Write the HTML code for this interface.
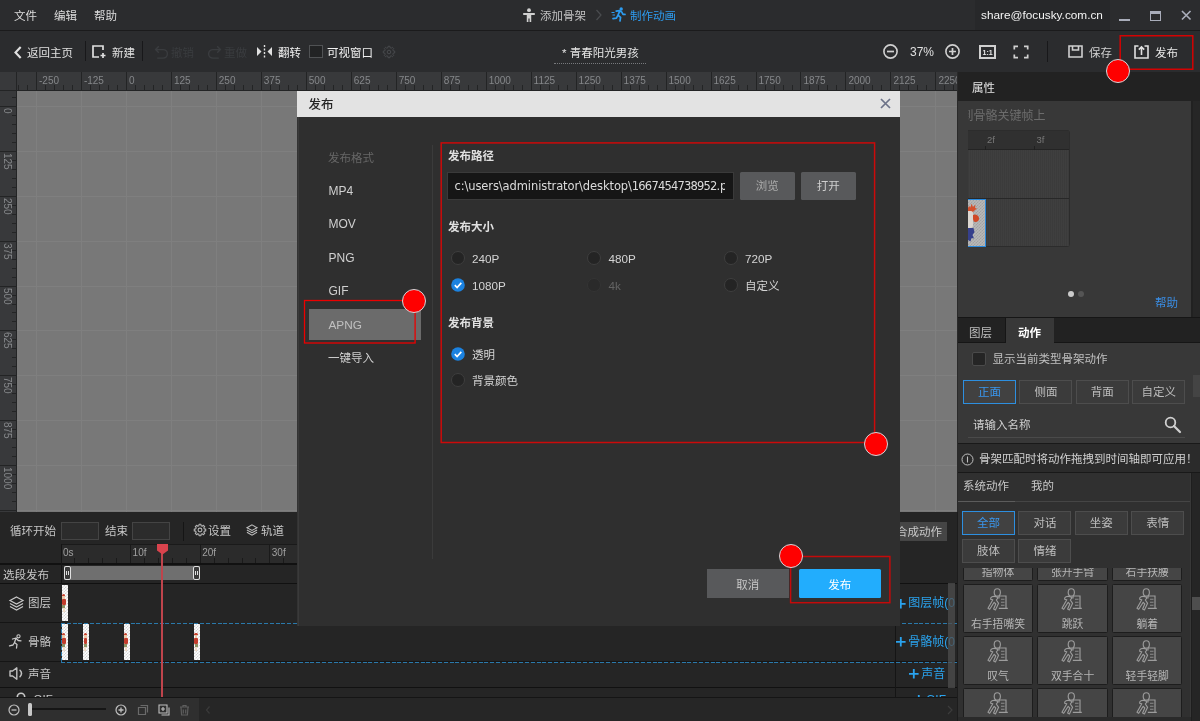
<!DOCTYPE html>
<html lang="zh-CN"><head><meta charset="utf-8"><title>发布</title>
<style>
*{box-sizing:border-box;margin:0;padding:0}
html,body{width:1200px;height:721px;overflow:hidden;background:#2b2c2e}
body{font-family:"Liberation Sans","Noto Sans CJK SC",sans-serif;font-size:11.5px;color:#d8d8d8;line-height:1}
#app{transform:translateZ(0);will-change:transform;position:relative;width:1200px;height:721px;overflow:hidden;background:#2b2c2e}
.a{position:absolute}
.t{position:absolute;white-space:nowrap;line-height:16px;height:16px}
svg{position:absolute;overflow:visible}
.blue{color:#2d9cf0}
.dim{color:#45474a}
.b{font-weight:bold}
.rc{position:absolute;border:1px solid #e00006}
.dot{position:absolute;width:24.200px;height:24.200px;border-radius:50%;background:#ff0000;border:1px solid #cfd9dc}

</style></head>
<body>
<div id="app">
<div class="a" id="titlebar" style="left:0;top:0;width:1200px;height:30px;background:#2b2c2e"></div>
<div class="a" style="left:0;top:30px;width:1200px;height:1px;background:#1b1b1c"></div>
<div class="a" style="left:975px;top:0;width:135px;height:30px;background:#27282a"></div>
<div class="t" style="left:14px;top:8px;color:#dcdcdc">文件</div>
<div class="t" style="left:54px;top:8px;color:#dcdcdc">编辑</div>
<div class="t" style="left:94px;top:8px;color:#dcdcdc">帮助</div>
<svg style="left:521.500px;top:7.500px" width="14" height="14.500" viewBox="0 0 14 15"><circle cx="7" cy="2.2" r="2" fill="#d0d0d0"/><path d="M1 5.2h12v2H9.3v7.3H7.6v-3.6H6.4v3.6H4.7V7.2H1z" fill="#d0d0d0"/></svg>
<div class="t" style="left:540px;top:8px;color:#c0c0c0">添加骨架</div>
<svg style="left:595px;top:9px" width="8" height="12" viewBox="0 0 8 12"><path d="M1.5 1l4.5 5-4.5 5" fill="none" stroke="#4a4c4f" stroke-width="1.2"/></svg>
<svg style="left:611px;top:7px" width="15" height="15" viewBox="0 0 15 15"><circle cx="10.2" cy="2" r="1.7" fill="#2d9cf0"/><path d="M5.2 4.2l3.6-.6 2 1.6 1.2 2.2h2M8.6 4.4L7 8.2l2.6 2.2-.6 3.6M7 8.2l-1.6 3-3.4.4" fill="none" stroke="#2d9cf0" stroke-width="1.7" stroke-linecap="round" stroke-linejoin="round"/><path d="M0.5 5.5h3M1.5 8h2.5" stroke="#2d9cf0" stroke-width="1.1"/></svg>
<div class="t blue" style="left:630px;top:8px">制作动画</div>
<div class="t" style="left:981px;top:7px;color:#f4f4f4;font-size:11.800px">share@focusky.com.cn</div>
<div class="a" style="left:1119px;top:19px;width:11px;height:2px;background:#a9adba"></div>
<div class="a" style="left:1149.500px;top:10.500px;width:11.500px;height:10px;border:1.500px solid #a9adba;border-top-width:3px"></div>
<svg style="left:1180.500px;top:9.500px" width="10.500" height="10.500" viewBox="0 0 11 11"><path d="M1 1l9 9M10 1l-9 9" stroke="#a9adba" stroke-width="1.700"/></svg>
<div class="a" id="toolbar" style="left:0;top:31px;width:1200px;height:41px;background:#2b2c2e"></div>
<svg style="left:14px;top:46px" width="8" height="13" viewBox="0 0 8 13"><path d="M6.700 1L1.500 6.500l5.200 5.500" fill="none" stroke="#e0e0e0" stroke-width="2.100"/></svg>
<div class="t" style="left:27px;top:45px;color:#e0e0e0">返回主页</div>
<div class="a" style="left:85px;top:41px;width:1px;height:20px;background:#18181a"></div>
<svg style="left:92px;top:45px" width="15" height="14" viewBox="0 0 15 14"><path d="M11 5V1H1v11h6" fill="none" stroke="#e0e0e0" stroke-width="1.7"/><path d="M11 8v5M8.5 10.5h5" stroke="#e0e0e0" stroke-width="1.7"/></svg>
<div class="t" style="left:112px;top:45px;color:#e0e0e0">新建</div>
<div class="a" style="left:142px;top:41px;width:1px;height:20px;background:#18181a"></div>
<svg style="left:153.500px;top:45px" width="15" height="14.500" viewBox="0 0 14 13"><path d="M4.5 1L1.5 4l3 3M1.5 4h7a4 4 0 0 1 0 8H3" fill="none" stroke="#3a3c3f" stroke-width="1.3"/></svg>
<div class="t" style="left:171px;top:45px;color:#3a3c3f">撤销</div>
<svg style="left:206.500px;top:44.500px" width="15" height="14.500" viewBox="0 0 14 13"><path d="M9.5 1l3 3-3 3M12.500 4h-7a4 4 0 0 0 0 8H11" fill="none" stroke="#3a3c3f" stroke-width="1.3"/></svg>
<div class="t" style="left:224px;top:45px;color:#3a3c3f">重做</div>
<svg style="left:256px;top:45px" width="17" height="13" viewBox="0 0 17 13"><path d="M1 2l4.500 4.500L1 11zM16 2l-4.500 4.500L16 11z" fill="#e0e0e0"/><path d="M8.500 0v13" stroke="#e0e0e0" stroke-width="1.4" stroke-dasharray="2 1.5"/></svg>
<div class="t" style="left:278px;top:45px;color:#f0f0f0">翻转</div>
<div class="a" style="left:309px;top:45px;width:14px;height:13px;background:#222324;border:1px solid #505254"></div>
<div class="t" style="left:327px;top:45px;color:#f0f0f0">可视窗口</div>
<svg style="left:383px;top:45.500px" width="12" height="12" viewBox="0 0 12 12"><path d="M10.26 4.89 L11.73 5.09 L11.73 6.91 L10.26 7.11 L9.80 8.22 L10.69 9.41 L9.41 10.69 L8.22 9.80 L7.11 10.26 L6.91 11.73 L5.09 11.73 L4.89 10.26 L3.78 9.80 L2.59 10.69 L1.31 9.41 L2.20 8.22 L1.74 7.11 L0.27 6.91 L0.27 5.09 L1.74 4.89 L2.20 3.78 L1.31 2.59 L2.59 1.31 L3.78 2.20 L4.89 1.74 L5.09 0.27 L6.91 0.27 L7.11 1.74 L8.22 2.20 L9.41 1.31 L10.69 2.59 L9.80 3.78Z" fill="none" stroke="#494b4e" stroke-width="1" stroke-linejoin="round"/><circle cx="6" cy="6" r="1.800" fill="none" stroke="#494b4e" stroke-width="1"/></svg>
<div class="t" style="left:562px;top:45px;color:#e4e4e4">* 青春阳光男孩</div>
<div class="a" style="left:554px;top:63px;width:92px;height:0;border-top:1px dotted #77797c"></div>
<svg style="left:883px;top:44px" width="15" height="15" viewBox="0 0 15 15"><circle cx="7.500" cy="7.500" r="6.600" fill="none" stroke="#d0d0d0" stroke-width="1.600"/><path d="M4 7.500h7" stroke="#d0d0d0" stroke-width="1.700"/></svg>
<div class="t" style="left:910px;top:44px;color:#e0e0e0;font-size:12px">37%</div>
<svg style="left:945px;top:44px" width="15" height="15" viewBox="0 0 15 15"><circle cx="7.500" cy="7.500" r="6.600" fill="none" stroke="#d0d0d0" stroke-width="1.600"/><path d="M4 7.500h7M7.500 4v7" stroke="#d0d0d0" stroke-width="1.700"/></svg>
<div class="a" style="left:979px;top:45px;width:16.500px;height:14px;border:2px solid #d0d0d0"></div><div class="t" style="left:982.500px;top:47.500px;font-size:7px;line-height:9px;height:9px;color:#e8e8e8;font-weight:bold">1:1</div>
<svg style="left:1013px;top:45px" width="16" height="14" viewBox="0 0 16 14"><path d="M1.300 4.500V1.300h3.700M11 1.300h3.700v3.200M14.700 9.500v3.200H11M5 12.700H1.300V9.500" fill="none" stroke="#d0d0d0" stroke-width="1.700"/></svg>
<div class="a" style="left:1047px;top:41px;width:1px;height:21px;background:#18181a"></div>
<svg style="left:1068px;top:45px" width="15" height="13" viewBox="0 0 15 13"><path d="M1 1h13v11H1z" fill="none" stroke="#d0d0d0" stroke-width="1.600"/><path d="M4.500 1v4h6V1" fill="none" stroke="#d0d0d0" stroke-width="1.600"/></svg>
<div class="t" style="left:1089px;top:45px;color:#d0d0d0">保存</div>
<svg style="left:1134px;top:44px" width="15" height="15" viewBox="0 0 15 15"><path d="M4.500 2H1v12h13V2h-3.500" fill="none" stroke="#e0e0e0" stroke-width="1.600"/><path d="M7.500 11V3M4.800 5.600L7.500 2.800l2.700 2.800" fill="none" stroke="#e0e0e0" stroke-width="1.600"/></svg>
<div class="t" style="left:1155px;top:45px;color:#e8e8e8">发布</div>
<div class="a" id="hruler" style="left:0;top:72px;width:958px;height:19px;background:#38393b;overflow:hidden">
<div class="a" style="left:-9.0px;top:0;width:1px;height:19px;background:#232425"></div><div class="a" style="left:-0.0px;top:13px;width:1px;height:6px;background:#232425"></div><div class="a" style="left:9.0px;top:13px;width:1px;height:6px;background:#232425"></div><div class="a" style="left:18.0px;top:13px;width:1px;height:6px;background:#232425"></div><div class="a" style="left:27.0px;top:13px;width:1px;height:6px;background:#232425"></div><div class="a" style="left:36.0px;top:0;width:1px;height:19px;background:#232425"></div><div class="a" style="left:45.0px;top:13px;width:1px;height:6px;background:#232425"></div><div class="a" style="left:53.9px;top:13px;width:1px;height:6px;background:#232425"></div><div class="a" style="left:62.9px;top:13px;width:1px;height:6px;background:#232425"></div><div class="a" style="left:71.9px;top:13px;width:1px;height:6px;background:#232425"></div><div class="t" style="left:39.0px;top:3px;font-size:10px;line-height:12px;height:12px;color:#85878a">-250</div>
<div class="a" style="left:80.9px;top:0;width:1px;height:19px;background:#232425"></div><div class="a" style="left:89.9px;top:13px;width:1px;height:6px;background:#232425"></div><div class="a" style="left:98.9px;top:13px;width:1px;height:6px;background:#232425"></div><div class="a" style="left:107.9px;top:13px;width:1px;height:6px;background:#232425"></div><div class="a" style="left:116.9px;top:13px;width:1px;height:6px;background:#232425"></div><div class="t" style="left:83.9px;top:3px;font-size:10px;line-height:12px;height:12px;color:#85878a">-125</div>
<div class="a" style="left:125.9px;top:0;width:1px;height:19px;background:#232425"></div><div class="a" style="left:134.9px;top:13px;width:1px;height:6px;background:#232425"></div><div class="a" style="left:143.9px;top:13px;width:1px;height:6px;background:#232425"></div><div class="a" style="left:152.9px;top:13px;width:1px;height:6px;background:#232425"></div><div class="a" style="left:161.9px;top:13px;width:1px;height:6px;background:#232425"></div><div class="t" style="left:128.9px;top:3px;font-size:10px;line-height:12px;height:12px;color:#85878a">0</div>
<div class="a" style="left:170.9px;top:0;width:1px;height:19px;background:#232425"></div><div class="a" style="left:179.9px;top:13px;width:1px;height:6px;background:#232425"></div><div class="a" style="left:188.9px;top:13px;width:1px;height:6px;background:#232425"></div><div class="a" style="left:197.9px;top:13px;width:1px;height:6px;background:#232425"></div><div class="a" style="left:206.8px;top:13px;width:1px;height:6px;background:#232425"></div><div class="t" style="left:173.9px;top:3px;font-size:10px;line-height:12px;height:12px;color:#85878a">125</div>
<div class="a" style="left:215.8px;top:0;width:1px;height:19px;background:#232425"></div><div class="a" style="left:224.8px;top:13px;width:1px;height:6px;background:#232425"></div><div class="a" style="left:233.8px;top:13px;width:1px;height:6px;background:#232425"></div><div class="a" style="left:242.8px;top:13px;width:1px;height:6px;background:#232425"></div><div class="a" style="left:251.8px;top:13px;width:1px;height:6px;background:#232425"></div><div class="t" style="left:218.8px;top:3px;font-size:10px;line-height:12px;height:12px;color:#85878a">250</div>
<div class="a" style="left:260.8px;top:0;width:1px;height:19px;background:#232425"></div><div class="a" style="left:269.8px;top:13px;width:1px;height:6px;background:#232425"></div><div class="a" style="left:278.8px;top:13px;width:1px;height:6px;background:#232425"></div><div class="a" style="left:287.8px;top:13px;width:1px;height:6px;background:#232425"></div><div class="a" style="left:296.8px;top:13px;width:1px;height:6px;background:#232425"></div><div class="t" style="left:263.8px;top:3px;font-size:10px;line-height:12px;height:12px;color:#85878a">375</div>
<div class="a" style="left:305.8px;top:0;width:1px;height:19px;background:#232425"></div><div class="a" style="left:314.8px;top:13px;width:1px;height:6px;background:#232425"></div><div class="a" style="left:323.8px;top:13px;width:1px;height:6px;background:#232425"></div><div class="a" style="left:332.8px;top:13px;width:1px;height:6px;background:#232425"></div><div class="a" style="left:341.8px;top:13px;width:1px;height:6px;background:#232425"></div><div class="t" style="left:308.8px;top:3px;font-size:10px;line-height:12px;height:12px;color:#85878a">500</div>
<div class="a" style="left:350.8px;top:0;width:1px;height:19px;background:#232425"></div><div class="a" style="left:359.7px;top:13px;width:1px;height:6px;background:#232425"></div><div class="a" style="left:368.7px;top:13px;width:1px;height:6px;background:#232425"></div><div class="a" style="left:377.7px;top:13px;width:1px;height:6px;background:#232425"></div><div class="a" style="left:386.7px;top:13px;width:1px;height:6px;background:#232425"></div><div class="t" style="left:353.8px;top:3px;font-size:10px;line-height:12px;height:12px;color:#85878a">625</div>
<div class="a" style="left:395.7px;top:0;width:1px;height:19px;background:#232425"></div><div class="a" style="left:404.7px;top:13px;width:1px;height:6px;background:#232425"></div><div class="a" style="left:413.7px;top:13px;width:1px;height:6px;background:#232425"></div><div class="a" style="left:422.7px;top:13px;width:1px;height:6px;background:#232425"></div><div class="a" style="left:431.7px;top:13px;width:1px;height:6px;background:#232425"></div><div class="t" style="left:398.7px;top:3px;font-size:10px;line-height:12px;height:12px;color:#85878a">750</div>
<div class="a" style="left:440.7px;top:0;width:1px;height:19px;background:#232425"></div><div class="a" style="left:449.7px;top:13px;width:1px;height:6px;background:#232425"></div><div class="a" style="left:458.7px;top:13px;width:1px;height:6px;background:#232425"></div><div class="a" style="left:467.7px;top:13px;width:1px;height:6px;background:#232425"></div><div class="a" style="left:476.7px;top:13px;width:1px;height:6px;background:#232425"></div><div class="t" style="left:443.7px;top:3px;font-size:10px;line-height:12px;height:12px;color:#85878a">875</div>
<div class="a" style="left:485.7px;top:0;width:1px;height:19px;background:#232425"></div><div class="a" style="left:494.7px;top:13px;width:1px;height:6px;background:#232425"></div><div class="a" style="left:503.6px;top:13px;width:1px;height:6px;background:#232425"></div><div class="a" style="left:512.6px;top:13px;width:1px;height:6px;background:#232425"></div><div class="a" style="left:521.6px;top:13px;width:1px;height:6px;background:#232425"></div><div class="t" style="left:488.7px;top:3px;font-size:10px;line-height:12px;height:12px;color:#85878a">1000</div>
<div class="a" style="left:530.6px;top:0;width:1px;height:19px;background:#232425"></div><div class="a" style="left:539.6px;top:13px;width:1px;height:6px;background:#232425"></div><div class="a" style="left:548.6px;top:13px;width:1px;height:6px;background:#232425"></div><div class="a" style="left:557.6px;top:13px;width:1px;height:6px;background:#232425"></div><div class="a" style="left:566.6px;top:13px;width:1px;height:6px;background:#232425"></div><div class="t" style="left:533.6px;top:3px;font-size:10px;line-height:12px;height:12px;color:#85878a">1125</div>
<div class="a" style="left:575.6px;top:0;width:1px;height:19px;background:#232425"></div><div class="a" style="left:584.6px;top:13px;width:1px;height:6px;background:#232425"></div><div class="a" style="left:593.6px;top:13px;width:1px;height:6px;background:#232425"></div><div class="a" style="left:602.6px;top:13px;width:1px;height:6px;background:#232425"></div><div class="a" style="left:611.6px;top:13px;width:1px;height:6px;background:#232425"></div><div class="t" style="left:578.6px;top:3px;font-size:10px;line-height:12px;height:12px;color:#85878a">1250</div>
<div class="a" style="left:620.6px;top:0;width:1px;height:19px;background:#232425"></div><div class="a" style="left:629.6px;top:13px;width:1px;height:6px;background:#232425"></div><div class="a" style="left:638.6px;top:13px;width:1px;height:6px;background:#232425"></div><div class="a" style="left:647.6px;top:13px;width:1px;height:6px;background:#232425"></div><div class="a" style="left:656.5px;top:13px;width:1px;height:6px;background:#232425"></div><div class="t" style="left:623.6px;top:3px;font-size:10px;line-height:12px;height:12px;color:#85878a">1375</div>
<div class="a" style="left:665.5px;top:0;width:1px;height:19px;background:#232425"></div><div class="a" style="left:674.5px;top:13px;width:1px;height:6px;background:#232425"></div><div class="a" style="left:683.5px;top:13px;width:1px;height:6px;background:#232425"></div><div class="a" style="left:692.5px;top:13px;width:1px;height:6px;background:#232425"></div><div class="a" style="left:701.5px;top:13px;width:1px;height:6px;background:#232425"></div><div class="t" style="left:668.5px;top:3px;font-size:10px;line-height:12px;height:12px;color:#85878a">1500</div>
<div class="a" style="left:710.5px;top:0;width:1px;height:19px;background:#232425"></div><div class="a" style="left:719.5px;top:13px;width:1px;height:6px;background:#232425"></div><div class="a" style="left:728.5px;top:13px;width:1px;height:6px;background:#232425"></div><div class="a" style="left:737.5px;top:13px;width:1px;height:6px;background:#232425"></div><div class="a" style="left:746.5px;top:13px;width:1px;height:6px;background:#232425"></div><div class="t" style="left:713.5px;top:3px;font-size:10px;line-height:12px;height:12px;color:#85878a">1625</div>
<div class="a" style="left:755.5px;top:0;width:1px;height:19px;background:#232425"></div><div class="a" style="left:764.5px;top:13px;width:1px;height:6px;background:#232425"></div><div class="a" style="left:773.5px;top:13px;width:1px;height:6px;background:#232425"></div><div class="a" style="left:782.5px;top:13px;width:1px;height:6px;background:#232425"></div><div class="a" style="left:791.5px;top:13px;width:1px;height:6px;background:#232425"></div><div class="t" style="left:758.5px;top:3px;font-size:10px;line-height:12px;height:12px;color:#85878a">1750</div>
<div class="a" style="left:800.4px;top:0;width:1px;height:19px;background:#232425"></div><div class="a" style="left:809.4px;top:13px;width:1px;height:6px;background:#232425"></div><div class="a" style="left:818.4px;top:13px;width:1px;height:6px;background:#232425"></div><div class="a" style="left:827.4px;top:13px;width:1px;height:6px;background:#232425"></div><div class="a" style="left:836.4px;top:13px;width:1px;height:6px;background:#232425"></div><div class="t" style="left:803.4px;top:3px;font-size:10px;line-height:12px;height:12px;color:#85878a">1875</div>
<div class="a" style="left:845.4px;top:0;width:1px;height:19px;background:#232425"></div><div class="a" style="left:854.4px;top:13px;width:1px;height:6px;background:#232425"></div><div class="a" style="left:863.4px;top:13px;width:1px;height:6px;background:#232425"></div><div class="a" style="left:872.4px;top:13px;width:1px;height:6px;background:#232425"></div><div class="a" style="left:881.4px;top:13px;width:1px;height:6px;background:#232425"></div><div class="t" style="left:848.4px;top:3px;font-size:10px;line-height:12px;height:12px;color:#85878a">2000</div>
<div class="a" style="left:890.4px;top:0;width:1px;height:19px;background:#232425"></div><div class="a" style="left:899.4px;top:13px;width:1px;height:6px;background:#232425"></div><div class="a" style="left:908.4px;top:13px;width:1px;height:6px;background:#232425"></div><div class="a" style="left:917.4px;top:13px;width:1px;height:6px;background:#232425"></div><div class="a" style="left:926.4px;top:13px;width:1px;height:6px;background:#232425"></div><div class="t" style="left:893.4px;top:3px;font-size:10px;line-height:12px;height:12px;color:#85878a">2125</div>
<div class="a" style="left:935.4px;top:0;width:1px;height:19px;background:#232425"></div><div class="a" style="left:944.4px;top:13px;width:1px;height:6px;background:#232425"></div><div class="a" style="left:953.3px;top:13px;width:1px;height:6px;background:#232425"></div><div class="a" style="left:962.3px;top:13px;width:1px;height:6px;background:#232425"></div><div class="a" style="left:971.3px;top:13px;width:1px;height:6px;background:#232425"></div><div class="t" style="left:938.4px;top:3px;font-size:10px;line-height:12px;height:12px;color:#85878a">2250</div>
</div>
<div class="a" style="left:0;top:72px;width:17px;height:19px;background:#38393b;border-right:1px solid #232425"></div>
<div class="a" style="left:0;top:90px;width:958px;height:1px;background:#232425"></div>
<div class="a" id="vruler" style="left:0;top:91px;width:17px;height:421px;background:#38393b;overflow:hidden">
<div class="a" style="left:0;top:-30.0px;width:17px;height:1px;background:#232425"></div><div class="a" style="left:12px;top:-21.0px;width:5px;height:1px;background:#232425"></div><div class="a" style="left:12px;top:-12.0px;width:5px;height:1px;background:#232425"></div><div class="a" style="left:12px;top:-3.1px;width:5px;height:1px;background:#232425"></div><div class="a" style="left:12px;top:5.9px;width:5px;height:1px;background:#232425"></div><div class="a" style="left:0;top:14.9px;width:17px;height:1px;background:#232425"></div><div class="a" style="left:12px;top:23.9px;width:5px;height:1px;background:#232425"></div><div class="a" style="left:12px;top:32.9px;width:5px;height:1px;background:#232425"></div><div class="a" style="left:12px;top:41.8px;width:5px;height:1px;background:#232425"></div><div class="a" style="left:12px;top:50.8px;width:5px;height:1px;background:#232425"></div><div class="t" style="left:3px;top:16.9px;font-size:10px;line-height:12px;height:12px;color:#85878a;transform-origin:0 0;transform:translate(10px,0) rotate(90deg)">0</div>
<div class="a" style="left:0;top:59.8px;width:17px;height:1px;background:#232425"></div><div class="a" style="left:12px;top:68.8px;width:5px;height:1px;background:#232425"></div><div class="a" style="left:12px;top:77.8px;width:5px;height:1px;background:#232425"></div><div class="a" style="left:12px;top:86.7px;width:5px;height:1px;background:#232425"></div><div class="a" style="left:12px;top:95.7px;width:5px;height:1px;background:#232425"></div><div class="t" style="left:3px;top:61.8px;font-size:10px;line-height:12px;height:12px;color:#85878a;transform-origin:0 0;transform:translate(10px,0) rotate(90deg)">125</div>
<div class="a" style="left:0;top:104.7px;width:17px;height:1px;background:#232425"></div><div class="a" style="left:12px;top:113.7px;width:5px;height:1px;background:#232425"></div><div class="a" style="left:12px;top:122.7px;width:5px;height:1px;background:#232425"></div><div class="a" style="left:12px;top:131.6px;width:5px;height:1px;background:#232425"></div><div class="a" style="left:12px;top:140.6px;width:5px;height:1px;background:#232425"></div><div class="t" style="left:3px;top:106.7px;font-size:10px;line-height:12px;height:12px;color:#85878a;transform-origin:0 0;transform:translate(10px,0) rotate(90deg)">250</div>
<div class="a" style="left:0;top:149.6px;width:17px;height:1px;background:#232425"></div><div class="a" style="left:12px;top:158.6px;width:5px;height:1px;background:#232425"></div><div class="a" style="left:12px;top:167.6px;width:5px;height:1px;background:#232425"></div><div class="a" style="left:12px;top:176.5px;width:5px;height:1px;background:#232425"></div><div class="a" style="left:12px;top:185.5px;width:5px;height:1px;background:#232425"></div><div class="t" style="left:3px;top:151.6px;font-size:10px;line-height:12px;height:12px;color:#85878a;transform-origin:0 0;transform:translate(10px,0) rotate(90deg)">375</div>
<div class="a" style="left:0;top:194.5px;width:17px;height:1px;background:#232425"></div><div class="a" style="left:12px;top:203.5px;width:5px;height:1px;background:#232425"></div><div class="a" style="left:12px;top:212.5px;width:5px;height:1px;background:#232425"></div><div class="a" style="left:12px;top:221.4px;width:5px;height:1px;background:#232425"></div><div class="a" style="left:12px;top:230.4px;width:5px;height:1px;background:#232425"></div><div class="t" style="left:3px;top:196.5px;font-size:10px;line-height:12px;height:12px;color:#85878a;transform-origin:0 0;transform:translate(10px,0) rotate(90deg)">500</div>
<div class="a" style="left:0;top:239.4px;width:17px;height:1px;background:#232425"></div><div class="a" style="left:12px;top:248.4px;width:5px;height:1px;background:#232425"></div><div class="a" style="left:12px;top:257.4px;width:5px;height:1px;background:#232425"></div><div class="a" style="left:12px;top:266.3px;width:5px;height:1px;background:#232425"></div><div class="a" style="left:12px;top:275.3px;width:5px;height:1px;background:#232425"></div><div class="t" style="left:3px;top:241.4px;font-size:10px;line-height:12px;height:12px;color:#85878a;transform-origin:0 0;transform:translate(10px,0) rotate(90deg)">625</div>
<div class="a" style="left:0;top:284.3px;width:17px;height:1px;background:#232425"></div><div class="a" style="left:12px;top:293.3px;width:5px;height:1px;background:#232425"></div><div class="a" style="left:12px;top:302.3px;width:5px;height:1px;background:#232425"></div><div class="a" style="left:12px;top:311.2px;width:5px;height:1px;background:#232425"></div><div class="a" style="left:12px;top:320.2px;width:5px;height:1px;background:#232425"></div><div class="t" style="left:3px;top:286.3px;font-size:10px;line-height:12px;height:12px;color:#85878a;transform-origin:0 0;transform:translate(10px,0) rotate(90deg)">750</div>
<div class="a" style="left:0;top:329.2px;width:17px;height:1px;background:#232425"></div><div class="a" style="left:12px;top:338.2px;width:5px;height:1px;background:#232425"></div><div class="a" style="left:12px;top:347.2px;width:5px;height:1px;background:#232425"></div><div class="a" style="left:12px;top:356.1px;width:5px;height:1px;background:#232425"></div><div class="a" style="left:12px;top:365.1px;width:5px;height:1px;background:#232425"></div><div class="t" style="left:3px;top:331.2px;font-size:10px;line-height:12px;height:12px;color:#85878a;transform-origin:0 0;transform:translate(10px,0) rotate(90deg)">875</div>
<div class="a" style="left:0;top:374.1px;width:17px;height:1px;background:#232425"></div><div class="a" style="left:12px;top:383.1px;width:5px;height:1px;background:#232425"></div><div class="a" style="left:12px;top:392.1px;width:5px;height:1px;background:#232425"></div><div class="a" style="left:12px;top:401.0px;width:5px;height:1px;background:#232425"></div><div class="a" style="left:12px;top:410.0px;width:5px;height:1px;background:#232425"></div><div class="t" style="left:3px;top:376.1px;font-size:10px;line-height:12px;height:12px;color:#85878a;transform-origin:0 0;transform:translate(10px,0) rotate(90deg)">1000</div>
<div class="a" style="left:0;top:419.0px;width:17px;height:1px;background:#232425"></div><div class="a" style="left:12px;top:428.0px;width:5px;height:1px;background:#232425"></div><div class="a" style="left:12px;top:437.0px;width:5px;height:1px;background:#232425"></div><div class="a" style="left:12px;top:445.9px;width:5px;height:1px;background:#232425"></div><div class="a" style="left:12px;top:454.9px;width:5px;height:1px;background:#232425"></div><div class="t" style="left:3px;top:421.0px;font-size:10px;line-height:12px;height:12px;color:#85878a;transform-origin:0 0;transform:translate(10px,0) rotate(90deg)">1125</div>
</div>
<div class="a" style="left:16px;top:91px;width:1px;height:421px;background:#232425"></div>
<div class="a" id="canvas" style="left:17px;top:91px;width:941px;height:421px;background:#787878;overflow:hidden">
<div class="a" style="left:19.0px;top:0;width:1px;height:421px;background:#7f7f7f"></div><div class="a" style="left:63.9px;top:0;width:1px;height:421px;background:#7f7f7f"></div><div class="a" style="left:108.9px;top:0;width:1px;height:421px;background:#7f7f7f"></div><div class="a" style="left:153.9px;top:0;width:1px;height:421px;background:#7f7f7f"></div><div class="a" style="left:198.8px;top:0;width:1px;height:421px;background:#7f7f7f"></div><div class="a" style="left:243.8px;top:0;width:1px;height:421px;background:#7f7f7f"></div><div class="a" style="left:288.8px;top:0;width:1px;height:421px;background:#7f7f7f"></div><div class="a" style="left:333.8px;top:0;width:1px;height:421px;background:#7f7f7f"></div><div class="a" style="left:378.7px;top:0;width:1px;height:421px;background:#7f7f7f"></div><div class="a" style="left:423.7px;top:0;width:1px;height:421px;background:#7f7f7f"></div><div class="a" style="left:468.7px;top:0;width:1px;height:421px;background:#7f7f7f"></div><div class="a" style="left:513.6px;top:0;width:1px;height:421px;background:#7f7f7f"></div><div class="a" style="left:558.6px;top:0;width:1px;height:421px;background:#7f7f7f"></div><div class="a" style="left:603.6px;top:0;width:1px;height:421px;background:#7f7f7f"></div><div class="a" style="left:648.5px;top:0;width:1px;height:421px;background:#7f7f7f"></div><div class="a" style="left:693.5px;top:0;width:1px;height:421px;background:#7f7f7f"></div><div class="a" style="left:738.5px;top:0;width:1px;height:421px;background:#7f7f7f"></div><div class="a" style="left:783.4px;top:0;width:1px;height:421px;background:#7f7f7f"></div><div class="a" style="left:828.4px;top:0;width:1px;height:421px;background:#7f7f7f"></div><div class="a" style="left:873.4px;top:0;width:1px;height:421px;background:#7f7f7f"></div><div class="a" style="left:918.4px;top:0;width:1px;height:421px;background:#7f7f7f"></div><div class="a" style="left:0;top:14.9px;width:941px;height:1px;background:#7f7f7f"></div><div class="a" style="left:0;top:59.8px;width:941px;height:1px;background:#7f7f7f"></div><div class="a" style="left:0;top:104.7px;width:941px;height:1px;background:#7f7f7f"></div><div class="a" style="left:0;top:149.6px;width:941px;height:1px;background:#7f7f7f"></div><div class="a" style="left:0;top:194.5px;width:941px;height:1px;background:#7f7f7f"></div><div class="a" style="left:0;top:239.4px;width:941px;height:1px;background:#7f7f7f"></div><div class="a" style="left:0;top:284.3px;width:941px;height:1px;background:#7f7f7f"></div><div class="a" style="left:0;top:329.2px;width:941px;height:1px;background:#7f7f7f"></div><div class="a" style="left:0;top:374.1px;width:941px;height:1px;background:#7f7f7f"></div><div class="a" style="left:0;top:419.0px;width:941px;height:1px;background:#7f7f7f"></div>
</div>
<div class="a" id="timeline" style="left:0;top:512px;width:958px;height:209px;background:#252525;overflow:hidden">
<div class="t" style="left:10px;top:11px;color:#c6c6c6">循环开始</div>
<div class="a" style="left:61px;top:10px;width:38px;height:18px;background:#2c2c2c;border:1px solid #444"></div>
<div class="t" style="left:105px;top:11px;color:#c6c6c6">结束</div>
<div class="a" style="left:132px;top:10px;width:38px;height:18px;background:#2c2c2c;border:1px solid #444"></div>
<div class="a" style="left:183px;top:10px;width:1px;height:19px;background:#151515"></div>
<svg style="left:193.700px;top:11.700px" width="12" height="12" viewBox="0 0 12 12"><path d="M10.26 4.89 L11.73 5.09 L11.73 6.91 L10.26 7.11 L9.80 8.22 L10.69 9.41 L9.41 10.69 L8.22 9.80 L7.11 10.26 L6.91 11.73 L5.09 11.73 L4.89 10.26 L3.78 9.80 L2.59 10.69 L1.31 9.41 L2.20 8.22 L1.74 7.11 L0.27 6.91 L0.27 5.09 L1.74 4.89 L2.20 3.78 L1.31 2.59 L2.59 1.31 L3.78 2.20 L4.89 1.74 L5.09 0.27 L6.91 0.27 L7.11 1.74 L8.22 2.20 L9.41 1.31 L10.69 2.59 L9.80 3.78Z" fill="none" stroke="#b4b4b4" stroke-width="1.100" stroke-linejoin="round"/><circle cx="6" cy="6" r="1.900" fill="none" stroke="#b4b4b4" stroke-width="1.100"/></svg>
<div class="t" style="left:208px;top:11px;color:#c6c6c6">设置</div>
<svg style="left:246px;top:12px" width="12" height="12" viewBox="0 0 13 13"><path d="M6.500 1L12 4 6.500 7 1 4z" fill="none" stroke="#c0c0c0" stroke-width="1.100"/><path d="M1 6.500l5.500 3 5.500-3M1 9l5.500 3L12 9" fill="none" stroke="#c0c0c0" stroke-width="1.100"/></svg>
<div class="t" style="left:261px;top:11px;color:#c6c6c6">轨道</div>
<div class="a" style="left:862px;top:10px;width:85px;height:19px;background:#454545;color:#c8c8c8;text-align:right;line-height:21px;overflow:hidden;padding-right:5px;white-space:nowrap">合成动作</div>
<div class="a" style="left:61px;top:32px;width:834px;height:19px;background:#2b2b2b;overflow:hidden">
<div class="a" style="left:-0.5px;top:0;width:1px;height:19px;background:#1a1a1a"></div><div class="a" style="left:13.4px;top:14px;width:1px;height:5px;background:#1a1a1a"></div><div class="a" style="left:27.3px;top:14px;width:1px;height:5px;background:#1a1a1a"></div><div class="a" style="left:41.3px;top:14px;width:1px;height:5px;background:#1a1a1a"></div><div class="a" style="left:55.2px;top:14px;width:1px;height:5px;background:#1a1a1a"></div><div class="t" style="left:2.0px;top:3px;font-size:10px;line-height:12px;height:12px;color:#a0a0a0">0s</div>
<div class="a" style="left:69.1px;top:0;width:1px;height:19px;background:#1a1a1a"></div><div class="a" style="left:83.0px;top:14px;width:1px;height:5px;background:#1a1a1a"></div><div class="a" style="left:96.9px;top:14px;width:1px;height:5px;background:#1a1a1a"></div><div class="a" style="left:110.9px;top:14px;width:1px;height:5px;background:#1a1a1a"></div><div class="a" style="left:124.8px;top:14px;width:1px;height:5px;background:#1a1a1a"></div><div class="t" style="left:71.6px;top:3px;font-size:10px;line-height:12px;height:12px;color:#a0a0a0">10f</div>
<div class="a" style="left:138.7px;top:0;width:1px;height:19px;background:#1a1a1a"></div><div class="a" style="left:152.6px;top:14px;width:1px;height:5px;background:#1a1a1a"></div><div class="a" style="left:166.5px;top:14px;width:1px;height:5px;background:#1a1a1a"></div><div class="a" style="left:180.5px;top:14px;width:1px;height:5px;background:#1a1a1a"></div><div class="a" style="left:194.4px;top:14px;width:1px;height:5px;background:#1a1a1a"></div><div class="t" style="left:141.2px;top:3px;font-size:10px;line-height:12px;height:12px;color:#a0a0a0">20f</div>
<div class="a" style="left:208.3px;top:0;width:1px;height:19px;background:#1a1a1a"></div><div class="a" style="left:222.2px;top:14px;width:1px;height:5px;background:#1a1a1a"></div><div class="a" style="left:236.1px;top:14px;width:1px;height:5px;background:#1a1a1a"></div><div class="a" style="left:250.1px;top:14px;width:1px;height:5px;background:#1a1a1a"></div><div class="a" style="left:264.0px;top:14px;width:1px;height:5px;background:#1a1a1a"></div><div class="t" style="left:210.8px;top:3px;font-size:10px;line-height:12px;height:12px;color:#a0a0a0">30f</div>
<div class="a" style="left:277.9px;top:0;width:1px;height:19px;background:#1a1a1a"></div><div class="a" style="left:291.8px;top:14px;width:1px;height:5px;background:#1a1a1a"></div><div class="a" style="left:305.7px;top:14px;width:1px;height:5px;background:#1a1a1a"></div><div class="a" style="left:319.7px;top:14px;width:1px;height:5px;background:#1a1a1a"></div><div class="a" style="left:333.6px;top:14px;width:1px;height:5px;background:#1a1a1a"></div><div class="t" style="left:280.4px;top:3px;font-size:10px;line-height:12px;height:12px;color:#a0a0a0">40f</div>
<div class="a" style="left:347.5px;top:0;width:1px;height:19px;background:#1a1a1a"></div><div class="a" style="left:361.4px;top:14px;width:1px;height:5px;background:#1a1a1a"></div><div class="a" style="left:375.3px;top:14px;width:1px;height:5px;background:#1a1a1a"></div><div class="a" style="left:389.3px;top:14px;width:1px;height:5px;background:#1a1a1a"></div><div class="a" style="left:403.2px;top:14px;width:1px;height:5px;background:#1a1a1a"></div><div class="t" style="left:350.0px;top:3px;font-size:10px;line-height:12px;height:12px;color:#a0a0a0">50f</div>
<div class="a" style="left:417.1px;top:0;width:1px;height:19px;background:#1a1a1a"></div><div class="a" style="left:431.0px;top:14px;width:1px;height:5px;background:#1a1a1a"></div><div class="a" style="left:444.9px;top:14px;width:1px;height:5px;background:#1a1a1a"></div><div class="a" style="left:458.9px;top:14px;width:1px;height:5px;background:#1a1a1a"></div><div class="a" style="left:472.8px;top:14px;width:1px;height:5px;background:#1a1a1a"></div><div class="t" style="left:419.6px;top:3px;font-size:10px;line-height:12px;height:12px;color:#a0a0a0">60f</div>
<div class="a" style="left:486.7px;top:0;width:1px;height:19px;background:#1a1a1a"></div><div class="a" style="left:500.6px;top:14px;width:1px;height:5px;background:#1a1a1a"></div><div class="a" style="left:514.5px;top:14px;width:1px;height:5px;background:#1a1a1a"></div><div class="a" style="left:528.5px;top:14px;width:1px;height:5px;background:#1a1a1a"></div><div class="a" style="left:542.4px;top:14px;width:1px;height:5px;background:#1a1a1a"></div><div class="t" style="left:489.2px;top:3px;font-size:10px;line-height:12px;height:12px;color:#a0a0a0">70f</div>
<div class="a" style="left:556.3px;top:0;width:1px;height:19px;background:#1a1a1a"></div><div class="a" style="left:570.2px;top:14px;width:1px;height:5px;background:#1a1a1a"></div><div class="a" style="left:584.1px;top:14px;width:1px;height:5px;background:#1a1a1a"></div><div class="a" style="left:598.1px;top:14px;width:1px;height:5px;background:#1a1a1a"></div><div class="a" style="left:612.0px;top:14px;width:1px;height:5px;background:#1a1a1a"></div><div class="t" style="left:558.8px;top:3px;font-size:10px;line-height:12px;height:12px;color:#a0a0a0">80f</div>
<div class="a" style="left:625.9px;top:0;width:1px;height:19px;background:#1a1a1a"></div><div class="a" style="left:639.8px;top:14px;width:1px;height:5px;background:#1a1a1a"></div><div class="a" style="left:653.7px;top:14px;width:1px;height:5px;background:#1a1a1a"></div><div class="a" style="left:667.7px;top:14px;width:1px;height:5px;background:#1a1a1a"></div><div class="a" style="left:681.6px;top:14px;width:1px;height:5px;background:#1a1a1a"></div><div class="t" style="left:628.4px;top:3px;font-size:10px;line-height:12px;height:12px;color:#a0a0a0">90f</div>
<div class="a" style="left:695.5px;top:0;width:1px;height:19px;background:#1a1a1a"></div><div class="a" style="left:709.4px;top:14px;width:1px;height:5px;background:#1a1a1a"></div><div class="a" style="left:723.3px;top:14px;width:1px;height:5px;background:#1a1a1a"></div><div class="a" style="left:737.3px;top:14px;width:1px;height:5px;background:#1a1a1a"></div><div class="a" style="left:751.2px;top:14px;width:1px;height:5px;background:#1a1a1a"></div><div class="t" style="left:698.0px;top:3px;font-size:10px;line-height:12px;height:12px;color:#a0a0a0">100f</div>
<div class="a" style="left:765.1px;top:0;width:1px;height:19px;background:#1a1a1a"></div><div class="a" style="left:779.0px;top:14px;width:1px;height:5px;background:#1a1a1a"></div><div class="a" style="left:792.9px;top:14px;width:1px;height:5px;background:#1a1a1a"></div><div class="a" style="left:806.9px;top:14px;width:1px;height:5px;background:#1a1a1a"></div><div class="a" style="left:820.8px;top:14px;width:1px;height:5px;background:#1a1a1a"></div><div class="t" style="left:767.6px;top:3px;font-size:10px;line-height:12px;height:12px;color:#a0a0a0">110f</div>
<div class="a" style="left:834.7px;top:0;width:1px;height:19px;background:#1a1a1a"></div><div class="a" style="left:848.6px;top:14px;width:1px;height:5px;background:#1a1a1a"></div><div class="a" style="left:862.5px;top:14px;width:1px;height:5px;background:#1a1a1a"></div><div class="a" style="left:876.5px;top:14px;width:1px;height:5px;background:#1a1a1a"></div><div class="a" style="left:890.4px;top:14px;width:1px;height:5px;background:#1a1a1a"></div><div class="t" style="left:837.2px;top:3px;font-size:10px;line-height:12px;height:12px;color:#a0a0a0">120f</div>
<div class="a" style="left:904.3px;top:0;width:1px;height:19px;background:#1a1a1a"></div><div class="a" style="left:918.2px;top:14px;width:1px;height:5px;background:#1a1a1a"></div><div class="a" style="left:932.1px;top:14px;width:1px;height:5px;background:#1a1a1a"></div><div class="a" style="left:946.1px;top:14px;width:1px;height:5px;background:#1a1a1a"></div><div class="a" style="left:960.0px;top:14px;width:1px;height:5px;background:#1a1a1a"></div><div class="t" style="left:906.8px;top:3px;font-size:10px;line-height:12px;height:12px;color:#a0a0a0">130f</div>
</div>
<div class="a" style="left:0;top:51px;width:895px;height:1.500px;background:#111"></div>
<div class="a" style="left:61px;top:32px;width:834px;height:1px;background:#1a1a1a"></div>
<div class="t" style="left:3px;top:55px;color:#c6c6c6">选段发布</div>
<div class="a" style="left:61px;top:32px;width:1px;height:40px;background:#151515"></div>
<div class="a" style="left:64px;top:54px;width:136px;height:14px;background:#6f6f6f"></div>
<div class="a" style="left:64px;top:54px;width:7px;height:14px;background:#3a3a3a;border:1px solid #e0e0e0;border-radius:2px"></div><div class="a" style="left:66px;top:59px;width:1px;height:4px;background:#e0e0e0"></div><div class="a" style="left:68px;top:59px;width:1px;height:4px;background:#e0e0e0"></div>
<div class="a" style="left:193px;top:54px;width:7px;height:14px;background:#3a3a3a;border:1px solid #e0e0e0;border-radius:2px"></div><div class="a" style="left:195px;top:59px;width:1px;height:4px;background:#e0e0e0"></div><div class="a" style="left:197px;top:59px;width:1px;height:4px;background:#e0e0e0"></div>
<div class="a" style="left:0;top:71px;width:958px;height:1px;background:#111"></div>
<svg style="left:9px;top:84px" width="15" height="15" viewBox="0 0 15 15"><path d="M7.500 1L14 4.500 7.500 8 1 4.500z" fill="none" stroke="#c8c8c8" stroke-width="1.200"/><path d="M1 7.500L7.500 11 14 7.500M1 10.500L7.500 14 14 10.500" fill="none" stroke="#c8c8c8" stroke-width="1.200"/></svg>
<div class="t" style="left:28px;top:83px;color:#c6c6c6">图层</div>
<div class="a" style="left:61.9px;top:72.5px;width:6.300px;height:36px;overflow:hidden;background-color:#fff;background-image:linear-gradient(45deg,#d4d4d4 25%,transparent 25%,transparent 75%,#d4d4d4 75%),linear-gradient(45deg,#d4d4d4 25%,transparent 25%,transparent 75%,#d4d4d4 75%);background-size:3px 3px;background-position:0 0,1.500px 1.500px"><div class="a" style="left:0px;top:9.500px;width:3.500px;height:2.200px;background:#c8402c;border-radius:1.500px 1.500px 0 0"></div><div class="a" style="left:0.5px;top:11.500px;width:2.500px;height:2.500px;background:#ecc8a8"></div><div class="a" style="left:0px;top:14px;width:3.800px;height:6px;background:#c23c2c;border-radius:1px"></div><div class="a" style="left:0.3px;top:20px;width:3px;height:3px;background:#8c9264"></div><div class="a" style="left:0.8px;top:23px;width:2px;height:4px;background:#f0dcc8"></div></div>
<div class="a" style="left:61px;top:110.500px;width:897px;height:1.600px;background:repeating-linear-gradient(90deg,#2a79ab 0,#2a79ab 4px,transparent 4px,transparent 5.800px)"></div>
<div class="a" style="left:0;top:109.500px;width:61px;height:1px;background:#151515"></div>
<div class="a" style="left:0;top:148.500px;width:958px;height:1px;background:#151515"></div>
<svg style="left:8px;top:122px" width="15" height="15" viewBox="0 0 15 15"><circle cx="10.500" cy="2.300" r="1.600" fill="none" stroke="#c8c8c8" stroke-width="1.100"/><path d="M4.500 5l3.500-1 2.200 2.500 2.800.3M8 4L6.500 8.500l2.500 2-.5 3.500M6.500 8.500L5 11l-3.500.800" fill="none" stroke="#c8c8c8" stroke-width="1.300" stroke-linecap="round" stroke-linejoin="round"/></svg>
<div class="t" style="left:28px;top:122px;color:#c6c6c6">骨骼</div>
<div class="a" style="left:61.9px;top:111.7px;width:6.300px;height:36.5px;overflow:hidden;background-color:#fff;background-image:linear-gradient(45deg,#d4d4d4 25%,transparent 25%,transparent 75%,#d4d4d4 75%),linear-gradient(45deg,#d4d4d4 25%,transparent 25%,transparent 75%,#d4d4d4 75%);background-size:3px 3px;background-position:0 0,1.500px 1.500px"><div class="a" style="left:0px;top:9.500px;width:3.500px;height:2.200px;background:#c8402c;border-radius:1.500px 1.500px 0 0"></div><div class="a" style="left:0.5px;top:11.500px;width:2.500px;height:2.500px;background:#ecc8a8"></div><div class="a" style="left:0px;top:14px;width:3.800px;height:6px;background:#c23c2c;border-radius:1px"></div><div class="a" style="left:0.3px;top:20px;width:3px;height:3px;background:#8c9264"></div><div class="a" style="left:0.8px;top:23px;width:2px;height:4px;background:#f0dcc8"></div></div>
<div class="a" style="left:82.9px;top:111.7px;width:6.300px;height:36.5px;overflow:hidden;background-color:#fff;background-image:linear-gradient(45deg,#d4d4d4 25%,transparent 25%,transparent 75%,#d4d4d4 75%),linear-gradient(45deg,#d4d4d4 25%,transparent 25%,transparent 75%,#d4d4d4 75%);background-size:3px 3px;background-position:0 0,1.500px 1.500px"><div class="a" style="left:0.8px;top:9.500px;width:3.500px;height:2.200px;background:#c8402c;border-radius:1.500px 1.500px 0 0"></div><div class="a" style="left:1.3px;top:11.500px;width:2.500px;height:2.500px;background:#ecc8a8"></div><div class="a" style="left:0.8px;top:14px;width:3.800px;height:6px;background:#c23c2c;border-radius:1px"></div><div class="a" style="left:1.1px;top:20px;width:3px;height:3px;background:#8c9264"></div><div class="a" style="left:1.6px;top:23px;width:2px;height:4px;background:#f0dcc8"></div></div>
<div class="a" style="left:123.9px;top:111.7px;width:6.300px;height:36.5px;overflow:hidden;background-color:#fff;background-image:linear-gradient(45deg,#d4d4d4 25%,transparent 25%,transparent 75%,#d4d4d4 75%),linear-gradient(45deg,#d4d4d4 25%,transparent 25%,transparent 75%,#d4d4d4 75%);background-size:3px 3px;background-position:0 0,1.500px 1.500px"><div class="a" style="left:0px;top:9.500px;width:3.500px;height:2.200px;background:#c8402c;border-radius:1.500px 1.500px 0 0"></div><div class="a" style="left:0.5px;top:11.500px;width:2.500px;height:2.500px;background:#ecc8a8"></div><div class="a" style="left:0px;top:14px;width:3.800px;height:6px;background:#c23c2c;border-radius:1px"></div><div class="a" style="left:0.3px;top:20px;width:3px;height:3px;background:#8c9264"></div><div class="a" style="left:0.8px;top:23px;width:2px;height:4px;background:#f0dcc8"></div></div>
<div class="a" style="left:193.9px;top:111.7px;width:6.300px;height:36.5px;overflow:hidden;background-color:#fff;background-image:linear-gradient(45deg,#d4d4d4 25%,transparent 25%,transparent 75%,#d4d4d4 75%),linear-gradient(45deg,#d4d4d4 25%,transparent 25%,transparent 75%,#d4d4d4 75%);background-size:3px 3px;background-position:0 0,1.500px 1.500px"><div class="a" style="left:0.5px;top:9.500px;width:3.500px;height:2.200px;background:#c8402c;border-radius:1.500px 1.500px 0 0"></div><div class="a" style="left:1.0px;top:11.500px;width:2.500px;height:2.500px;background:#ecc8a8"></div><div class="a" style="left:0.5px;top:14px;width:3.800px;height:6px;background:#c23c2c;border-radius:1px"></div><div class="a" style="left:0.8px;top:20px;width:3px;height:3px;background:#8c9264"></div><div class="a" style="left:1.3px;top:23px;width:2px;height:4px;background:#f0dcc8"></div></div>
<div class="a" style="left:61px;top:149.500px;width:897px;height:1.600px;background:repeating-linear-gradient(90deg,#2a79ab 0,#2a79ab 4px,transparent 4px,transparent 5.800px)"></div>
<div class="a" style="left:61px;top:111px;width:1.300px;height:39px;background:repeating-linear-gradient(180deg,#2a79ab 0,#2a79ab 4px,transparent 4px,transparent 5.800px)"></div>
<svg style="left:8.500px;top:155px" width="14" height="13" viewBox="0 0 14 13"><path d="M1 4h2.600L7.800 0.800v11.400L3.600 9H1z" fill="none" stroke="#c0c0c0" stroke-width="1.400" stroke-linejoin="round"/><path d="M11 3.300c1.800 1.900 1.800 4.500 0 6.400" fill="none" stroke="#c0c0c0" stroke-width="1.500" stroke-linecap="round"/></svg>
<div class="t" style="left:28px;top:154px;color:#c6c6c6">声音</div>
<div class="a" style="left:0;top:174.500px;width:958px;height:1px;background:#111"></div>
<svg style="left:16px;top:179.500px" width="10" height="10" viewBox="0 0 10 10"><circle cx="5" cy="5" r="3.700" fill="none" stroke="#c8c8c8" stroke-width="1.600"/></svg>
<div class="t" style="left:33.500px;top:179px;color:#c6c6c6">GIF</div>
<div class="a" style="left:895px;top:111px;width:1px;height:75px;background:#151515"></div>
<svg style="left:896.3px;top:86.5px" width="9.600" height="9.600" viewBox="0 0 10 10"><path d="M5 0v10M0 5h10" stroke="#2aa3ee" stroke-width="1.900"/></svg><div class="t" style="left:908.300px;top:83px;width:46.500px;overflow:hidden;color:#2aa3ee;font-size:12px">图层帧(0)</div>
<svg style="left:895.5px;top:125.2px" width="9.600" height="9.600" viewBox="0 0 10 10"><path d="M5 0v10M0 5h10" stroke="#2aa3ee" stroke-width="1.900"/></svg><div class="t" style="left:908.300px;top:122px;width:46.500px;overflow:hidden;color:#2aa3ee;font-size:12px">骨骼帧(0)</div>
<svg style="left:908.6px;top:157.2px" width="9.600" height="9.600" viewBox="0 0 10 10"><path d="M5 0v10M0 5h10" stroke="#2aa3ee" stroke-width="1.900"/></svg><div class="t" style="left:921.300px;top:154px;color:#2aa3ee;font-size:12px">声音</div>
<svg style="left:913.5px;top:183.2px" width="9.600" height="9.600" viewBox="0 0 10 10"><path d="M5 0v10M0 5h10" stroke="#2aa3ee" stroke-width="1.900"/></svg><div class="t" style="left:926px;top:180px;color:#2aa3ee;font-size:12px">GIF</div>
<div class="a" style="left:948px;top:71px;width:7px;height:105px;background:rgba(78,78,78,0.760)"></div>
<div class="a" style="left:161.200px;top:36px;width:1.800px;height:150px;background:#bf444c"></div>
<svg style="left:157px;top:32px" width="11" height="11" viewBox="0 0 11 11"><path d="M0 0h11v6.500L5.500 10.500 0 6.500z" fill="#d9434d"/></svg>
<div class="a" style="left:0;top:185.500px;width:958px;height:24px;background:#262626"></div>
<div class="a" style="left:0;top:185.500px;width:199px;height:24px;background:#2f2f2f"></div>
<div class="a" style="left:0;top:185px;width:958px;height:1px;background:#151515"></div>
<svg style="left:8px;top:192px" width="12" height="12" viewBox="0 0 12 12"><circle cx="6" cy="6" r="5" fill="none" stroke="#c0c0c0" stroke-width="1.200"/><path d="M3.500 6h5" stroke="#c0c0c0" stroke-width="1.300"/></svg>
<div class="a" style="left:31px;top:196px;width:75px;height:2px;background:#161616"></div>
<div class="a" style="left:28px;top:191px;width:3.500px;height:13px;background:#c8c8c8;border-radius:1.500px"></div>
<svg style="left:115px;top:192px" width="12" height="12" viewBox="0 0 12 12"><circle cx="6" cy="6" r="5" fill="none" stroke="#c0c0c0" stroke-width="1.200"/><path d="M3.500 6h5M6 3.500v5" stroke="#c0c0c0" stroke-width="1.300"/></svg>
<svg style="left:137px;top:192px" width="12" height="12" viewBox="0 0 12 12"><path d="M3.500 1.500h7v7" fill="none" stroke="#6a6a6a" stroke-width="1.200"/><path d="M1.500 3.500h7v7h-7z" fill="none" stroke="#6a6a6a" stroke-width="1.200"/></svg>
<svg style="left:158px;top:192px" width="12" height="12" viewBox="0 0 12 12"><path d="M1 1h8v8H1z" fill="none" stroke="#c0c0c0" stroke-width="1.100"/><path d="M5 3v4M3 5h4" stroke="#c0c0c0" stroke-width="1.200"/><path d="M11 3.500V11H3.500" fill="none" stroke="#c0c0c0" stroke-width="1.100"/></svg>
<svg style="left:179px;top:192px" width="11" height="12" viewBox="0 0 11 12"><path d="M1 3h9M4 3V1.500h3V3M2 3.500l.6 7.500h5.800L9 3.500M4.300 5.500v4M6.700 5.500v4" fill="none" stroke="#5e5e5e" stroke-width="1.200"/></svg>
<svg style="left:205px;top:193px" width="6" height="10" viewBox="0 0 6 10"><path d="M4.500 1.500L1.500 5l3 3.500" fill="none" stroke="#3a3a3a" stroke-width="1.200"/></svg>
<svg style="left:947px;top:193px" width="6" height="10" viewBox="0 0 6 10"><path d="M1 1l4 4-4 4" fill="none" stroke="#3c3c3c" stroke-width="1.200"/></svg>
</div>
<div class="a" id="right" style="left:957px;top:72px;width:243px;height:649px;background:#383838;overflow:hidden">
<div class="a" style="left:0;top:0;width:1px;height:440px;background:#2a2a2a"></div><div class="a" style="left:0;top:440px;width:1px;height:209px;background:#1c1c1c"></div>
<div class="a" style="left:1px;top:0;width:242px;height:29px;background:#222"></div>
<div class="t" style="left:15px;top:8px;color:#e6e6e6">属性</div>
<div class="a" style="left:235px;top:29px;width:8px;height:216px;background:#262626"></div>
<div class="a" style="left:234px;top:29px;width:1.500px;height:216px;background:#212121"></div>
<div class="a" style="left:11px;top:36px;width:110px;height:16px;overflow:hidden"><div class="t" style="left:-6.500px;top:0;color:#6c6c6c;font-size:12px">到骨骼关键帧上</div></div>
<div class="a" style="left:11px;top:58px;width:102px;height:116.500px;background:#3f3f3f;border-radius:0 3.500px 3.500px 0;overflow:hidden;background-image:repeating-linear-gradient(90deg,rgba(0,0,0,0.060) 0,rgba(0,0,0,0.060) 1px,transparent 1px,transparent 2px)">
<div class="a" style="left:0;top:0;width:102px;height:20px;background:#303030;border-bottom:1.500px solid #242424"></div><div class="a" style="left:17px;top:15.500px;width:1px;height:4px;background:#202020"></div><div class="a" style="left:66px;top:15.500px;width:1px;height:4px;background:#202020"></div><div class="t" style="left:19px;top:3.500px;font-size:9.500px;line-height:11px;height:11px;color:#787878">2f</div><div class="t" style="left:68.500px;top:3.500px;font-size:9.500px;line-height:11px;height:11px;color:#787878">3f</div><div class="a" style="left:0;top:67.500px;width:102px;height:1.200px;background:#282828"></div><div class="a" style="left:101px;top:0;width:1px;height:117px;background:#2c2c2c"></div><div class="a" style="left:0;top:115.500px;width:102px;height:1px;background:#2c2c2c"></div><div class="a" style="left:0;top:0;width:102px;height:1px;background:#2c2c2c"></div><div class="a" style="left:0;top:68.500px;width:18.300px;height:48px;background-color:#b8b8b8;border:1.500px solid #2a8ade;border-left:0;background-image:linear-gradient(45deg,#a2a2a2 25%,transparent 25%,transparent 75%,#a2a2a2 75%),linear-gradient(45deg,#a2a2a2 25%,transparent 25%,transparent 75%,#a2a2a2 75%);background-size:3px 3px;background-position:0 0,1.500px 1.500px"></div><svg style="left:0;top:70px" width="17" height="45" viewBox="0 0 17 45"><path d="M0 8l1-2 1.500 1.500L3.500 3.500 5 7l2.500-2.500-.5 3.500 2 .500-2.500 2L5 12H0z" fill="#d4502c"/><path d="M0 11h3c1.500 0 2 1 2 3v11c0 2-1 3-3 3H0z" fill="#dcd6d0"/><path d="M5 15c2.500-1.500 5.500 0 6 3 .300 2.500-1.500 4-3.500 4S5 20 5 18z" fill="#d04826"/><path d="M0 28h5.500l1 4-2 3 1.500 3.500-2.500-.500-1 3.500L0 40z" fill="#36408c"/></svg></div>
<div class="a" style="left:111px;top:219px;width:6px;height:6px;border-radius:3px;background:#cbcbcb"></div><div class="a" style="left:121px;top:219px;width:6px;height:6px;border-radius:3px;background:#555"></div>
<div class="t" style="left:198px;top:223px;color:#3a8ee6">帮助</div>
<div class="a" style="left:1px;top:245px;width:242px;height:26px;background:#222"></div>
<div class="a" style="left:1px;top:244.500px;width:242px;height:1px;background:#161616"></div>
<div class="a" style="left:1px;top:270px;width:242px;height:1.200px;background:#161616"></div>
<div class="a" style="left:49px;top:246px;width:48px;height:26px;background:#383838"></div>
<div class="a" style="left:48px;top:246px;width:1px;height:25px;background:#161616"></div>
<div class="t" style="left:12px;top:253px;color:#bebebe">图层</div>
<div class="t b" style="left:61px;top:253px;color:#fff">动作</div>
<div class="a" style="left:236px;top:303px;width:7px;height:22px;background:#444"></div>
<div class="a" style="left:15px;top:280px;width:14px;height:14px;background:#252525;border:1px solid #4a4a4a;border-radius:2px"></div>
<div class="t" style="left:35.500px;top:279px;color:#c0c0c0">显示当前类型骨架动作</div>
<div class="a" style="left:6.0px;top:308px;width:53px;height:24px;background:#414141;border:1px solid #2d8fe0;color:#3a97ee;text-align:center;line-height:23.5px;white-space:nowrap">正面</div>
<div class="a" style="left:62.4px;top:308px;width:53px;height:24px;background:#3b3b3b;border:1px solid #4d4d4d;color:#bdbdbd;text-align:center;line-height:23.5px;white-space:nowrap">侧面</div>
<div class="a" style="left:118.8px;top:308px;width:53px;height:24px;background:#3b3b3b;border:1px solid #4d4d4d;color:#bdbdbd;text-align:center;line-height:23.5px;white-space:nowrap">背面</div>
<div class="a" style="left:175.2px;top:308px;width:53px;height:24px;background:#3b3b3b;border:1px solid #4d4d4d;color:#bdbdbd;text-align:center;line-height:23.5px;white-space:nowrap">自定义</div>
<div class="t" style="left:16px;top:345px;color:#d0d0d0">请输入名称</div>
<div class="a" style="left:11px;top:365px;width:217px;height:1px;background:#4a4a4a"></div>
<svg style="left:207px;top:344px" width="18" height="18" viewBox="0 0 18 18"><circle cx="6.500" cy="6.500" r="4.800" fill="none" stroke="#d0d0d0" stroke-width="1.800"/><path d="M10 10l6 6" stroke="#d0d0d0" stroke-width="2.200" stroke-linecap="round"/></svg>
<div class="a" style="left:1px;top:371px;width:242px;height:30px;background:#2b2b2b;border-top:1.500px solid #191919;border-bottom:1.500px solid #191919"></div>
<svg style="left:4px;top:381px" width="13" height="13" viewBox="0 0 13 13"><circle cx="6.500" cy="6.500" r="5.500" fill="none" stroke="#c0c0c0" stroke-width="1"/><path d="M6.500 3.500v6" stroke="#c0c0c0" stroke-width="1.100"/></svg>
<div class="t" style="left:22px;top:379px;color:#d0d0d0;font-size:11.500px">骨架匹配时将动作拖拽到时间轴即可应用！</div>
<div class="a" style="left:1px;top:401px;width:232px;height:248px;background:#303030"></div>
<div class="a" style="left:233.500px;top:401px;width:10px;height:248px;background:#252525;border-left:1px solid #1e1e1e"></div>
<div class="t" style="left:6px;top:406px;color:#c8c8c8">系统动作</div>
<div class="t" style="left:74px;top:406px;color:#c8c8c8">我的</div>
<div class="a" style="left:1px;top:429px;width:232px;height:1px;background:#454545"></div>
<div class="a" style="left:1px;top:428.500px;width:57px;height:1.500px;background:#5c5c5c"></div>
<div class="a" style="left:5.0px;top:439px;width:53px;height:23.5px;background:#414141;border:1px solid #2d8fe0;color:#3a97ee;text-align:center;line-height:23.0px;white-space:nowrap">全部</div>
<div class="a" style="left:61.4px;top:439px;width:53px;height:23.5px;background:#3b3b3b;border:1px solid #4d4d4d;color:#bdbdbd;text-align:center;line-height:23.0px;white-space:nowrap">对话</div>
<div class="a" style="left:117.8px;top:439px;width:53px;height:23.5px;background:#3b3b3b;border:1px solid #4d4d4d;color:#bdbdbd;text-align:center;line-height:23.0px;white-space:nowrap">坐姿</div>
<div class="a" style="left:174.2px;top:439px;width:53px;height:23.5px;background:#3b3b3b;border:1px solid #4d4d4d;color:#bdbdbd;text-align:center;line-height:23.0px;white-space:nowrap">表情</div>
<div class="a" style="left:5.0px;top:467px;width:53px;height:23.5px;background:#3b3b3b;border:1px solid #4d4d4d;color:#bdbdbd;text-align:center;line-height:23.0px;white-space:nowrap">肢体</div>
<div class="a" style="left:61.4px;top:467px;width:53px;height:23.5px;background:#3b3b3b;border:1px solid #4d4d4d;color:#bdbdbd;text-align:center;line-height:23.0px;white-space:nowrap">情绪</div>
<div class="a" style="left:1px;top:495.500px;width:232px;height:154px;overflow:hidden">
<div class="a" style="left:4.5px;top:-35.5px;width:70.800px;height:48.500px;background:#454545;border:1px solid #1d1d1d;border-radius:1.500px"><svg style="left:22px;top:3px" width="22" height="23" viewBox="0 0 22 23"><ellipse cx="11.300" cy="4.400" rx="3.100" ry="3.700" fill="none" stroke="#9c9c9c" stroke-width="1.150"/><path d="M10 8.600C7 7.800 4.300 8.800 4.600 11.200l2.200.600L2 20.300l1.700 1 4.500-7 1.600 1.700-2.200 5 1.800.900 3.200-6.600-2.300-3.300 1.700-2.200z" fill="none" stroke="#9c9c9c" stroke-width="1.150" stroke-linejoin="round"/><path d="M13 8h7v12.300h1.800M13 8v2.400M12.800 20.400h7.200" fill="none" stroke="#9c9c9c" stroke-width="1.150"/><path d="M15 11.200h3.500M15 14.200h3.500M15 17.200h3.500" stroke="#8c8c8c" stroke-width="1.100"/></svg><div class="t" style="left:0;top:30.500px;width:69px;text-align:center;color:#b6b6b6;font-size:10.800px">指物体</div></div>
<div class="a" style="left:79.1px;top:-35.5px;width:70.800px;height:48.500px;background:#454545;border:1px solid #1d1d1d;border-radius:1.500px"><svg style="left:22px;top:3px" width="22" height="23" viewBox="0 0 22 23"><ellipse cx="11.300" cy="4.400" rx="3.100" ry="3.700" fill="none" stroke="#9c9c9c" stroke-width="1.150"/><path d="M10 8.600C7 7.800 4.300 8.800 4.600 11.200l2.200.600L2 20.300l1.700 1 4.500-7 1.600 1.700-2.200 5 1.800.900 3.200-6.600-2.300-3.300 1.700-2.200z" fill="none" stroke="#9c9c9c" stroke-width="1.150" stroke-linejoin="round"/><path d="M13 8h7v12.300h1.800M13 8v2.400M12.800 20.400h7.200" fill="none" stroke="#9c9c9c" stroke-width="1.150"/><path d="M15 11.200h3.500M15 14.200h3.500M15 17.200h3.500" stroke="#8c8c8c" stroke-width="1.100"/></svg><div class="t" style="left:0;top:30.500px;width:69px;text-align:center;color:#b6b6b6;font-size:10.800px">张开手臂</div></div>
<div class="a" style="left:153.7px;top:-35.5px;width:70.800px;height:48.500px;background:#454545;border:1px solid #1d1d1d;border-radius:1.500px"><svg style="left:22px;top:3px" width="22" height="23" viewBox="0 0 22 23"><ellipse cx="11.300" cy="4.400" rx="3.100" ry="3.700" fill="none" stroke="#9c9c9c" stroke-width="1.150"/><path d="M10 8.600C7 7.800 4.300 8.800 4.600 11.200l2.200.600L2 20.300l1.700 1 4.500-7 1.600 1.700-2.200 5 1.800.900 3.200-6.600-2.300-3.300 1.700-2.200z" fill="none" stroke="#9c9c9c" stroke-width="1.150" stroke-linejoin="round"/><path d="M13 8h7v12.300h1.800M13 8v2.400M12.800 20.400h7.200" fill="none" stroke="#9c9c9c" stroke-width="1.150"/><path d="M15 11.200h3.500M15 14.200h3.500M15 17.200h3.500" stroke="#8c8c8c" stroke-width="1.100"/></svg><div class="t" style="left:0;top:30.500px;width:69px;text-align:center;color:#b6b6b6;font-size:10.800px">右手扶腰</div></div>
<div class="a" style="left:4.5px;top:16.6px;width:70.800px;height:48.500px;background:#454545;border:1px solid #1d1d1d;border-radius:1.500px"><svg style="left:22px;top:3px" width="22" height="23" viewBox="0 0 22 23"><ellipse cx="11.300" cy="4.400" rx="3.100" ry="3.700" fill="none" stroke="#9c9c9c" stroke-width="1.150"/><path d="M10 8.600C7 7.800 4.300 8.800 4.600 11.200l2.200.600L2 20.300l1.700 1 4.500-7 1.600 1.700-2.200 5 1.800.900 3.200-6.600-2.300-3.300 1.700-2.200z" fill="none" stroke="#9c9c9c" stroke-width="1.150" stroke-linejoin="round"/><path d="M13 8h7v12.300h1.800M13 8v2.400M12.800 20.400h7.200" fill="none" stroke="#9c9c9c" stroke-width="1.150"/><path d="M15 11.200h3.500M15 14.200h3.500M15 17.200h3.500" stroke="#8c8c8c" stroke-width="1.100"/></svg><div class="t" style="left:0;top:30.500px;width:69px;text-align:center;color:#b6b6b6;font-size:10.800px">右手捂嘴笑</div></div>
<div class="a" style="left:79.1px;top:16.6px;width:70.800px;height:48.500px;background:#454545;border:1px solid #1d1d1d;border-radius:1.500px"><svg style="left:22px;top:3px" width="22" height="23" viewBox="0 0 22 23"><ellipse cx="11.300" cy="4.400" rx="3.100" ry="3.700" fill="none" stroke="#9c9c9c" stroke-width="1.150"/><path d="M10 8.600C7 7.800 4.300 8.800 4.600 11.200l2.200.600L2 20.300l1.700 1 4.500-7 1.600 1.700-2.200 5 1.800.900 3.200-6.600-2.300-3.300 1.700-2.200z" fill="none" stroke="#9c9c9c" stroke-width="1.150" stroke-linejoin="round"/><path d="M13 8h7v12.300h1.800M13 8v2.400M12.800 20.400h7.200" fill="none" stroke="#9c9c9c" stroke-width="1.150"/><path d="M15 11.200h3.500M15 14.200h3.500M15 17.200h3.500" stroke="#8c8c8c" stroke-width="1.100"/></svg><div class="t" style="left:0;top:30.500px;width:69px;text-align:center;color:#b6b6b6;font-size:10.800px">跳跃</div></div>
<div class="a" style="left:153.7px;top:16.6px;width:70.800px;height:48.500px;background:#454545;border:1px solid #1d1d1d;border-radius:1.500px"><svg style="left:22px;top:3px" width="22" height="23" viewBox="0 0 22 23"><ellipse cx="11.300" cy="4.400" rx="3.100" ry="3.700" fill="none" stroke="#9c9c9c" stroke-width="1.150"/><path d="M10 8.600C7 7.800 4.300 8.800 4.600 11.200l2.200.600L2 20.300l1.700 1 4.500-7 1.600 1.700-2.200 5 1.800.900 3.200-6.600-2.300-3.300 1.700-2.200z" fill="none" stroke="#9c9c9c" stroke-width="1.150" stroke-linejoin="round"/><path d="M13 8h7v12.300h1.800M13 8v2.400M12.800 20.400h7.200" fill="none" stroke="#9c9c9c" stroke-width="1.150"/><path d="M15 11.200h3.500M15 14.200h3.500M15 17.200h3.500" stroke="#8c8c8c" stroke-width="1.100"/></svg><div class="t" style="left:0;top:30.500px;width:69px;text-align:center;color:#b6b6b6;font-size:10.800px">躺着</div></div>
<div class="a" style="left:4.5px;top:68.7px;width:70.800px;height:48.500px;background:#454545;border:1px solid #1d1d1d;border-radius:1.500px"><svg style="left:22px;top:3px" width="22" height="23" viewBox="0 0 22 23"><ellipse cx="11.300" cy="4.400" rx="3.100" ry="3.700" fill="none" stroke="#9c9c9c" stroke-width="1.150"/><path d="M10 8.600C7 7.800 4.300 8.800 4.600 11.200l2.200.600L2 20.300l1.700 1 4.500-7 1.600 1.700-2.200 5 1.800.900 3.200-6.600-2.300-3.300 1.700-2.200z" fill="none" stroke="#9c9c9c" stroke-width="1.150" stroke-linejoin="round"/><path d="M13 8h7v12.300h1.800M13 8v2.400M12.800 20.400h7.200" fill="none" stroke="#9c9c9c" stroke-width="1.150"/><path d="M15 11.200h3.500M15 14.200h3.500M15 17.200h3.500" stroke="#8c8c8c" stroke-width="1.100"/></svg><div class="t" style="left:0;top:30.500px;width:69px;text-align:center;color:#b6b6b6;font-size:10.800px">叹气</div></div>
<div class="a" style="left:79.1px;top:68.7px;width:70.800px;height:48.500px;background:#454545;border:1px solid #1d1d1d;border-radius:1.500px"><svg style="left:22px;top:3px" width="22" height="23" viewBox="0 0 22 23"><ellipse cx="11.300" cy="4.400" rx="3.100" ry="3.700" fill="none" stroke="#9c9c9c" stroke-width="1.150"/><path d="M10 8.600C7 7.800 4.300 8.800 4.600 11.200l2.200.600L2 20.300l1.700 1 4.500-7 1.600 1.700-2.200 5 1.800.900 3.200-6.600-2.300-3.300 1.700-2.200z" fill="none" stroke="#9c9c9c" stroke-width="1.150" stroke-linejoin="round"/><path d="M13 8h7v12.300h1.800M13 8v2.400M12.800 20.400h7.200" fill="none" stroke="#9c9c9c" stroke-width="1.150"/><path d="M15 11.200h3.500M15 14.200h3.500M15 17.200h3.500" stroke="#8c8c8c" stroke-width="1.100"/></svg><div class="t" style="left:0;top:30.500px;width:69px;text-align:center;color:#b6b6b6;font-size:10.800px">双手合十</div></div>
<div class="a" style="left:153.7px;top:68.7px;width:70.800px;height:48.500px;background:#454545;border:1px solid #1d1d1d;border-radius:1.500px"><svg style="left:22px;top:3px" width="22" height="23" viewBox="0 0 22 23"><ellipse cx="11.300" cy="4.400" rx="3.100" ry="3.700" fill="none" stroke="#9c9c9c" stroke-width="1.150"/><path d="M10 8.600C7 7.800 4.300 8.800 4.600 11.200l2.200.600L2 20.300l1.700 1 4.500-7 1.600 1.700-2.200 5 1.800.900 3.200-6.600-2.300-3.300 1.700-2.200z" fill="none" stroke="#9c9c9c" stroke-width="1.150" stroke-linejoin="round"/><path d="M13 8h7v12.300h1.800M13 8v2.400M12.800 20.400h7.200" fill="none" stroke="#9c9c9c" stroke-width="1.150"/><path d="M15 11.200h3.500M15 14.200h3.500M15 17.200h3.500" stroke="#8c8c8c" stroke-width="1.100"/></svg><div class="t" style="left:0;top:30.500px;width:69px;text-align:center;color:#b6b6b6;font-size:10.800px">轻手轻脚</div></div>
<div class="a" style="left:4.5px;top:120.8px;width:70.800px;height:48.500px;background:#454545;border:1px solid #1d1d1d;border-radius:1.500px"><svg style="left:22px;top:3px" width="22" height="23" viewBox="0 0 22 23"><ellipse cx="11.300" cy="4.400" rx="3.100" ry="3.700" fill="none" stroke="#9c9c9c" stroke-width="1.150"/><path d="M10 8.600C7 7.800 4.300 8.800 4.600 11.200l2.200.600L2 20.300l1.700 1 4.500-7 1.600 1.700-2.200 5 1.800.900 3.200-6.600-2.300-3.300 1.700-2.200z" fill="none" stroke="#9c9c9c" stroke-width="1.150" stroke-linejoin="round"/><path d="M13 8h7v12.300h1.800M13 8v2.400M12.800 20.400h7.200" fill="none" stroke="#9c9c9c" stroke-width="1.150"/><path d="M15 11.200h3.500M15 14.200h3.500M15 17.200h3.500" stroke="#8c8c8c" stroke-width="1.100"/></svg><div class="t" style="left:0;top:30.500px;width:69px;text-align:center;color:#b6b6b6;font-size:10.800px"></div></div>
<div class="a" style="left:79.1px;top:120.8px;width:70.800px;height:48.500px;background:#454545;border:1px solid #1d1d1d;border-radius:1.500px"><svg style="left:22px;top:3px" width="22" height="23" viewBox="0 0 22 23"><ellipse cx="11.300" cy="4.400" rx="3.100" ry="3.700" fill="none" stroke="#9c9c9c" stroke-width="1.150"/><path d="M10 8.600C7 7.800 4.300 8.800 4.600 11.200l2.200.600L2 20.300l1.700 1 4.500-7 1.600 1.700-2.200 5 1.800.900 3.200-6.600-2.300-3.300 1.700-2.200z" fill="none" stroke="#9c9c9c" stroke-width="1.150" stroke-linejoin="round"/><path d="M13 8h7v12.300h1.800M13 8v2.400M12.800 20.400h7.200" fill="none" stroke="#9c9c9c" stroke-width="1.150"/><path d="M15 11.200h3.500M15 14.200h3.500M15 17.200h3.500" stroke="#8c8c8c" stroke-width="1.100"/></svg><div class="t" style="left:0;top:30.500px;width:69px;text-align:center;color:#b6b6b6;font-size:10.800px"></div></div>
<div class="a" style="left:153.7px;top:120.8px;width:70.800px;height:48.500px;background:#454545;border:1px solid #1d1d1d;border-radius:1.500px"><svg style="left:22px;top:3px" width="22" height="23" viewBox="0 0 22 23"><ellipse cx="11.300" cy="4.400" rx="3.100" ry="3.700" fill="none" stroke="#9c9c9c" stroke-width="1.150"/><path d="M10 8.600C7 7.800 4.300 8.800 4.600 11.200l2.200.600L2 20.300l1.700 1 4.500-7 1.600 1.700-2.200 5 1.800.900 3.200-6.600-2.300-3.300 1.700-2.200z" fill="none" stroke="#9c9c9c" stroke-width="1.150" stroke-linejoin="round"/><path d="M13 8h7v12.300h1.800M13 8v2.400M12.800 20.400h7.200" fill="none" stroke="#9c9c9c" stroke-width="1.150"/><path d="M15 11.200h3.500M15 14.200h3.500M15 17.200h3.500" stroke="#8c8c8c" stroke-width="1.100"/></svg><div class="t" style="left:0;top:30.500px;width:69px;text-align:center;color:#b6b6b6;font-size:10.800px"></div></div>
</div>
<div class="a" style="left:1px;top:644.500px;width:233px;height:5px;background:#2a2a2a"></div>
<div class="a" style="left:235px;top:525px;width:8px;height:13px;background:#4e4e4e"></div>
</div>
<div class="a" style="left:297px;top:91px;width:2px;height:25.500px;background:#e3e3e3"></div><div class="a" style="left:297px;top:116.500px;width:2px;height:509.500px;background:#333"></div>
<div class="a" id="dialog" style="left:297.500px;top:91px;width:602.500px;height:535px;background:#2f2f2f;overflow:hidden">
<div class="a" style="left:0;top:0;width:603px;height:25.500px;background:#e3e3e3"></div>
<div class="a" style="left:0;top:25.500px;width:1px;height:510px;background:#3a3a3a"></div>
<div class="t" style="left:11px;top:6px;color:#262626;font-size:12.500px;font-weight:500">发布</div>
<svg style="left:582.500px;top:7px" width="11" height="11" viewBox="0 0 11 11"><path d="M1 1l9 9M10 1l-9 9" stroke="#6c7288" stroke-width="1.700"/></svg>
<div class="t" style="left:30.500px;top:59px;color:#666">发布格式</div>
<div class="t" style="left:31px;top:91.5px;color:#d0d0d0;font-size:12px">MP4</div>
<div class="t" style="left:31px;top:125.0px;color:#d0d0d0;font-size:12px">MOV</div>
<div class="t" style="left:31px;top:158.5px;color:#d0d0d0;font-size:12px">PNG</div>
<div class="t" style="left:31px;top:192.0px;color:#d0d0d0;font-size:12px">GIF</div>
<div class="a" style="left:11.500px;top:217.500px;width:112px;height:31.500px;background:#6b6b6b"></div>
<div class="t" style="left:31px;top:225.500px;color:#c0c0c0;font-size:11.800px">APNG</div>
<div class="t" style="left:30.500px;top:259px;color:#d0d0d0">一键导入</div>
<div class="a" style="left:134.500px;top:54px;width:1px;height:414px;background:#3b3b3b"></div>
<div class="t b" style="left:150.500px;top:57px;color:#e0e0e0">发布路径</div>
<div class="a" style="left:149.500px;top:80.500px;width:286.500px;height:28px;background:#161616;border:1px solid #3a3a3a"><div class="a" style="left:0;top:0;width:276.500px;height:26px;overflow:hidden"><div class="t" style="left:6.500px;top:5px;color:#dcdcdc;font-size:11.500px;font-family:'DejaVu Sans','Liberation Sans',sans-serif;letter-spacing:-0.100px">c:\users\administrator\desktop\<span style="letter-spacing:-0.800px">1667454738952</span>.png</div></div></div>
<div class="a" style="left:442px;top:80.500px;width:55.500px;height:28.500px;background:#58595b;border-radius:1.500px;color:#ababab;text-align:center;line-height:29px">浏览</div>
<div class="a" style="left:503px;top:80.500px;width:55.500px;height:28.500px;background:#58595b;border-radius:1.500px;color:#cfcfcf;text-align:center;line-height:29px">打开</div>
<div class="t b" style="left:150.500px;top:128px;color:#e0e0e0">发布大小</div>
<div class="a" style="left:153px;top:160px;width:14px;height:14px;border-radius:7px;background:#242424;border:1px solid #3e3e3e"></div><div class="t" style="left:174.5px;top:160px;color:#d4d4d4;font-size:11.700px">240P</div>
<div class="a" style="left:289.5px;top:160px;width:14px;height:14px;border-radius:7px;background:#242424;border:1px solid #3e3e3e"></div><div class="t" style="left:311.0px;top:160px;color:#d4d4d4;font-size:11.700px">480P</div>
<div class="a" style="left:426px;top:160px;width:14px;height:14px;border-radius:7px;background:#242424;border:1px solid #3e3e3e"></div><div class="t" style="left:447.5px;top:160px;color:#d4d4d4;font-size:11.700px">720P</div>
<svg style="left:153px;top:186.5px" width="14" height="14" viewBox="0 0 14 14"><circle cx="7" cy="7" r="6.800" fill="#1b82e0"/><path d="M3.800 7.200l2.300 2.300 4.200-4.600" fill="none" stroke="#fff" stroke-width="1.700"/></svg><div class="t" style="left:174.5px;top:186.5px;color:#d4d4d4;font-size:11.700px">1080P</div>
<div class="a" style="left:289.5px;top:186.5px;width:14px;height:14px;border-radius:7px;background:#2a2a2a;border:1px solid #343434"></div><div class="t" style="left:311.0px;top:186.5px;color:#636363;font-size:11.700px">4k</div>
<div class="a" style="left:426px;top:186.5px;width:14px;height:14px;border-radius:7px;background:#242424;border:1px solid #3e3e3e"></div><div class="t" style="left:447.5px;top:186.5px;color:#d4d4d4;font-size:11.500px">自定义</div>
<div class="t b" style="left:150.500px;top:224px;color:#e0e0e0">发布背景</div>
<svg style="left:153px;top:255.5px" width="14" height="14" viewBox="0 0 14 14"><circle cx="7" cy="7" r="6.800" fill="#1b82e0"/><path d="M3.800 7.200l2.300 2.300 4.200-4.600" fill="none" stroke="#fff" stroke-width="1.700"/></svg><div class="t" style="left:174.5px;top:255.5px;color:#d4d4d4;font-size:11.500px">透明</div>
<div class="a" style="left:153px;top:282px;width:14px;height:14px;border-radius:7px;background:#242424;border:1px solid #3e3e3e"></div><div class="t" style="left:174.5px;top:282px;color:#d4d4d4;font-size:11.500px">背景颜色</div>
<div class="a" style="left:409px;top:478px;width:82.300px;height:29px;background:#58595b;color:#c8c8c8;text-align:center;line-height:32px;overflow:hidden">取消</div>
<div class="a" style="left:501.300px;top:478px;width:82.100px;height:29px;border-radius:1.500px;background:#22adfd;color:#fff;text-align:center;line-height:32px;overflow:hidden">发布</div>
</div>
<svg style="left:0;top:0" width="1200" height="721"><rect x="1120.2" y="35.75" width="72.60" height="33.50" fill="none" stroke="#d40202" stroke-width="1.5"/></svg>
<div class="dot" style="left:1106.0px;top:59.0px"></div>
<svg style="left:0;top:0" width="1200" height="721"><rect x="304.5" y="300.5" width="110.60" height="42.50" fill="none" stroke="#ec0000" stroke-width="1.3"/></svg>
<div class="dot" style="left:401.9px;top:288.9px"></div>
<svg style="left:0;top:0" width="1200" height="721"><rect x="441.2" y="142.9" width="433.40" height="299.60" fill="none" stroke="#cc0a0a" stroke-width="1.5"/></svg>
<div class="dot" style="left:863.7px;top:431.5px"></div>
<svg style="left:0;top:0" width="1200" height="721"><rect x="790.6" y="556.5" width="99.30" height="46.20" fill="none" stroke="#c40a0a" stroke-width="1.5"/></svg>
<div class="dot" style="left:778.9px;top:544.1px"></div>
</div>
</body></html>
